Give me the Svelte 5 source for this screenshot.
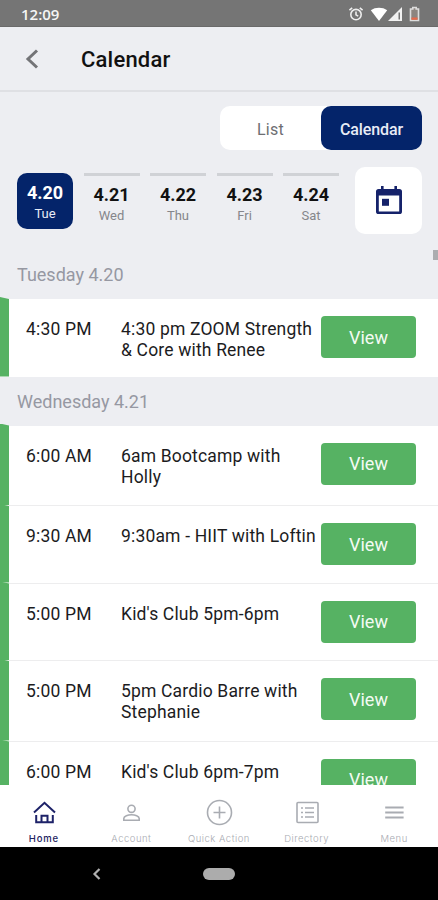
<script lang="ts">
  interface ClassItem {
    time: string;
    title: string;
  }

  interface ScheduleDay {
    label: string;
    items: ClassItem[];
  }

  const dates = [
    { date: '4.20', day: 'Tue' },
    { date: '4.21', day: 'Wed' },
    { date: '4.22', day: 'Thu' },
    { date: '4.23', day: 'Fri' },
    { date: '4.24', day: 'Sat' }
  ];

  const schedule: ScheduleDay[] = [
    {
      label: 'Tuesday 4.20',
      items: [{ time: '4:30 PM', title: '4:30 pm ZOOM Strength & Core with Renee' }]
    },
    {
      label: 'Wednesday 4.21',
      items: [
        { time: '6:00 AM', title: '6am Bootcamp with Holly' },
        { time: '9:30 AM', title: '9:30am - HIIT with Loftin' },
        { time: '5:00 PM', title: "Kid's Club 5pm-6pm" },
        { time: '5:00 PM', title: '5pm Cardio Barre with Stephanie' },
        { time: '6:00 PM', title: "Kid's Club 6pm-7pm" }
      ]
    }
  ];

  const tabs = ['Home', 'Account', 'Quick Action', 'Directory', 'Menu'];

  let selected = $state('4.20');
  let view = $state('Calendar');
  let activeTab = $state('Home');
</script>

<div class="screen">
  <div class="status">
    <span class="clock">12:09</span>
    <div class="status-icons">
      <svg class="alarm" width="16" height="16" viewBox="0 0 16 16">
        <circle cx="8" cy="8.6" r="5.2" />
        <path d="M8 5.5v3.3l2.2 1.4M1.4 4.2 4.2 1.9M14.6 4.2l-2.8-2.3" />
      </svg>
      <svg class="wifi" width="18" height="16" viewBox="0 0 18 16">
        <path d="M9 15 .8 4.2C5.4.9 12.6.9 17.2 4.2z" />
      </svg>
      <svg class="signal" width="15" height="16" viewBox="0 0 15 16">
        <path d="M0 15 14 1v14z" />
        <path class="gap" d="M10.5 6.5H12v7h-1.5z" />
      </svg>
      <svg class="battery" width="11" height="16" viewBox="0 0 11 16">
        <path class="shell" d="M1.5 3h2.300V1.500h3.400V3h2.300v11.500h-8z" />
        <path class="low" d="M2.500 11.500h6v2.300h-6z" />
      </svg>
    </div>
  </div>

  <header>
    <svg class="back" width="14" height="20" viewBox="0 0 14 20">
      <path d="M12 1.500 3 10l9 8.500" />
    </svg>
    <h1>Calendar</h1>
  </header>

  <div class="toolbar">
    <div class="toggle">
      {#each ['List', 'Calendar'] as name}
        <button class:active={view === name} onclick={() => (view = name)}>{name}</button>
      {/each}
    </div>
  </div>

  <div class="date-row">
    {#each dates as d}
      <button class="date" class:active={selected === d.date} onclick={() => (selected = d.date)}>
        <strong>{d.date}</strong>
        <span>{d.day}</span>
      </button>
    {/each}
    <button class="picker" aria-label="Pick a date">
      <svg width="26" height="29" viewBox="0 0 26 29">
        <path
          fill-rule="evenodd"
          d="M5 0h2.600v3h10.800V0H21v3h2.400A2.600 2.600 0 0 1 26 5.600v19.800a2.600 2.600 0 0 1-2.600 2.600H2.600A2.600 2.600 0 0 1 0 25.400V5.600A2.600 2.600 0 0 1 2.600 3H5zM2.800 9.600v15.800h20.400V9.600z"
        />
        <path d="M6 12.800h7v7H6z" />
      </svg>
    </button>
  </div>

  <main>
    {#each schedule as day}
      <section>
        <h2>{day.label}</h2>
        {#each day.items as item}
          <article>
            <!-- coloured edge, slanted at the top -->
            <div class="edge"></div>
            <time>{item.time}</time>
            <p>{item.title}</p>
            <button class="view">View</button>
          </article>
        {/each}
      </section>
    {/each}
    <div class="scrollbar"></div>
  </main>

  <nav>
    {#each tabs as tab}
      <button class:active={activeTab === tab} onclick={() => (activeTab = tab)}>
        <svg width="30" height="30" viewBox="0 0 30 30">
          {#if tab === 'Home'}
            <path d="M5 15.500 15.500 5.800 26 15.500M7.200 18v7.300h16.600V18M12.500 25v-6.300h6V25" />
          {:else if tab === 'Account'}
            <circle cx="15.500" cy="11.800" r="3.600" />
            <path d="M7.800 23.200v-1.700c0-2.500 4.200-3.700 7.700-3.700s7.700 1.200 7.700 3.700v1.700z" />
          {:else if tab === 'Quick Action'}
            <circle cx="15.500" cy="15.500" r="12" />
            <path d="M15.500 9.500v12M9.500 15.500h12" />
          {:else if tab === 'Directory'}
            <rect x="5" y="5.500" width="21" height="20" rx="1" />
            <path d="M13 11h9M13 15.500h9M13 20h9M9 11h2M9 15.500h2M9 20h2" />
          {:else}
            <path class="bars" d="M6.200 10.500h18.400M6.200 15.500h18.400M6.200 20.500h18.400" />
          {/if}
        </svg>
        <span>{tab}</span>
      </button>
    {/each}
  </nav>

  <div class="system">
    <svg width="10" height="14" viewBox="0 0 10 14">
      <path d="M7.500 2 2.500 7l5 5" />
    </svg>
    <div class="pill"></div>
  </div>
</div>

<style>
  :global(body) {
    margin: 0;
  }

  .screen {
    width: 438px;
    height: 900px;
    display: flex;
    flex-direction: column;
    overflow: hidden;
    background: #edeef2;
    font-family: Roboto, 'Liberation Sans', sans-serif;
    color: #1c1c1e;
  }

  button {
    margin: 0;
    padding: 0;
    border: 0;
    background: none;
    font: inherit;
    color: inherit;
    cursor: pointer;
  }

  .status {
    flex: none;
    box-sizing: border-box;
    height: 27px;
    padding: 1px 18px 0 21px;
    display: flex;
    align-items: center;
    justify-content: space-between;
    background: #757575;
    border-bottom: 1px solid #6a6a6a;
    color: #f5f5f5;
  }

  .clock {
    font-family: 'Open Sans', Roboto, sans-serif;
    font-size: 15px;
    font-weight: 600;
  }

  .status-icons {
    display: flex;
    align-items: center;
  }

  .alarm {
    margin-right: 6px;
    fill: none;
    stroke: #eee;
    stroke-width: 1.6;
  }

  .wifi {
    fill: #fff;
  }

  .signal {
    margin-right: 6px;
    fill: #f2f2f2;
  }

  .gap {
    fill: #757575;
  }

  .shell {
    fill: #8c8580;
    stroke: #ddd;
    stroke-width: 1.6;
  }

  .low {
    fill: #e8694a;
  }

  header {
    flex: none;
    box-sizing: border-box;
    height: 65px;
    padding-left: 25px;
    display: flex;
    align-items: center;
    gap: 42px;
    border-bottom: 2px solid #dfe0e4;
  }

  .back {
    fill: none;
    stroke: #737477;
    stroke-width: 3;
  }

  h1 {
    margin: 2px 0 0;
    font-size: 22px;
    font-weight: 500;
    letter-spacing: 0.2px;
    color: #111;
  }

  .toolbar {
    flex: none;
    display: flex;
    justify-content: flex-end;
    padding: 14px 16px 0;
  }

  .toggle {
    width: 202px;
    height: 44px;
    display: flex;
    border-radius: 10px;
    background: #fff;
  }

  .toggle button {
    flex: 1;
    padding-top: 2px;
    border-radius: 10px;
    font-size: 16px;
    letter-spacing: 0.3px;
    color: #6d6e72;
  }

  .toggle button.active {
    background: #04246a;
    color: #e8ecf6;
    font-weight: 500;
    letter-spacing: -0.1px;
  }

  .date-row {
    flex: none;
    height: 67px;
    padding: 17px 16px 0 17px;
    display: flex;
    align-items: center;
    gap: 10.500px;
  }

  .date {
    box-sizing: border-box;
    width: 56px;
    height: 56px;
    padding-top: 9px;
    display: flex;
    flex-direction: column;
    align-items: center;
    border-top: 3px solid #d0d2d6;
    color: #85868b;
  }

  .date strong {
    font-size: 18px;
    line-height: 20px;
    font-weight: 700;
    color: #111;
  }

  .date span {
    font-size: 13px;
    line-height: 21px;
  }

  .date.active {
    padding-top: 10px;
    border-top: 0;
    border-radius: 10px;
    background: #04246a;
    color: #e8ecf6;
  }

  .date.active strong {
    color: #fff;
  }

  .picker {
    width: 67px;
    height: 67px;
    margin-left: auto;
    display: grid;
    place-items: center;
    border-radius: 10px;
    background: #fff;
    fill: #15226a;
  }

  .picker svg {
    margin-bottom: 1px;
  }

  main {
    position: relative;
    flex: none;
    box-sizing: border-box;
    height: 551px;
    padding-top: 16px;
    overflow: hidden;
  }

  .scrollbar {
    position: absolute;
    top: 16px;
    right: 0;
    width: 5px;
    height: 10px;
    background: #acadb0;
  }

  h2 {
    margin: 0;
    height: 49px;
    padding-left: 17px;
    font-size: 18px;
    line-height: 49px;
    font-weight: 400;
    color: #9698a2;
  }

  article {
    position: relative;
    box-sizing: border-box;
    min-height: 77.500px;
    padding-right: 22px;
    display: flex;
    align-items: flex-start;
    background: #fff;
    border-bottom: 1.500px solid #ededee;
    font-size: 17.500px;
    line-height: 21px;
    letter-spacing: 0.17px;
  }

  section:first-child article:last-child {
    height: 77.500px;
    border-bottom: 0;
  }

  .edge {
    position: absolute;
    top: -2px;
    bottom: 0;
    left: 0;
    width: 9px;
    background: #56b263;
    clip-path: polygon(0 0, 100% 2px, 100% 100%, 0 100%);
  }

  time {
    width: 95px;
    padding: 20px 0 0 26px;
  }

  p {
    width: 200px;
    margin: 0;
    padding: 20px 0 17.500px;
  }

  .view {
    width: 95px;
    height: 42px;
    margin: 17px 0 0;
    border-radius: 4px;
    background: #56b263;
    font-size: 18px;
    letter-spacing: 0;
    color: #f3fbf3;
  }

  nav {
    flex: none;
    height: 62px;
    display: grid;
    grid-template-columns: repeat(5, 1fr);
    background: #fff;
  }

  nav button {
    display: flex;
    flex-direction: column;
    align-items: center;
    padding-top: 12px;
    font-family: Inter, Roboto, sans-serif;
    font-size: 9.500px;
    line-height: 14px;
    font-weight: 300;
    letter-spacing: 0.5px;
    color: #a9abb2;
  }

  nav svg {
    margin-bottom: 5px;
    fill: none;
    stroke: #a9acb2;
    stroke-width: 1.600;
  }

  nav .bars {
    stroke-width: 2.200;
  }

  nav .active {
    color: #1d2260;
    font-weight: 500;
    letter-spacing: 0.8px;
  }

  nav .active svg {
    stroke: #1d2268;
    stroke-width: 2;
  }

  .system {
    flex: 1;
    display: grid;
    grid-template-columns: 1fr 32px 1fr;
    align-items: center;
    background: #000;
  }

  .system svg {
    justify-self: center;
    margin-right: 9px;
    fill: none;
    stroke: #b0b0b0;
    stroke-width: 2.200;
  }

  .pill {
    height: 12px;
    border-radius: 6px;
    background: #acacac;
  }
</style>
